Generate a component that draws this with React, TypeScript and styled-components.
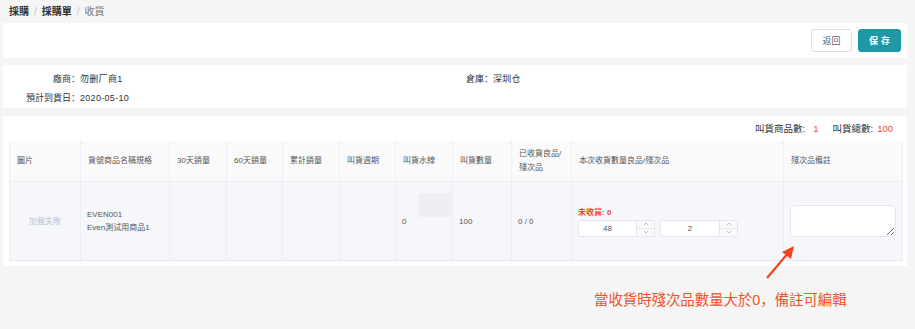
import React from "react";
import styled, { createGlobalStyle } from "styled-components";

const Global = createGlobalStyle`
  html, body { margin: 0; padding: 0; background: #f5f5f5; }
  body { font-family: "Liberation Sans", "Noto Sans CJK SC", "Noto Sans CJK TC", sans-serif; color: #303133; }
  * { box-sizing: border-box; }
`;

const Page = styled.div`
  position: relative;
  width: 915px;
  height: 329px;
  padding: 0 8px 0 3px;
  display: flex;
  flex-direction: column;
  overflow: hidden;
`;

const Crumbs = styled.div`
  height: 23px;
  display: flex;
  align-items: center;
  padding-left: 6px;
  font-size: 10px;
  line-height: 12px;
`;

const Crumb = styled.span<{ $current?: boolean }>`
  font-weight: ${(p) => (p.$current ? 400 : 700)};
  color: ${(p) => (p.$current ? "#777" : "#303133")};
`;

const Sep = styled.span`
  color: #c0c4cc;
  margin: 0 5px;
`;

const Card = styled.div<{ $h: number; $mt?: number }>`
  background: #fff;
  height: ${(p) => p.$h}px;
  margin-top: ${(p) => p.$mt ?? 0}px;
`;

const Toolbar = styled(Card)`
  display: flex;
  justify-content: flex-end;
  align-items: center;
  gap: 6px;
  padding-right: 6px;
`;

const Button = styled.button<{ $primary?: boolean }>`
  height: 23px;
  padding: 0;
  width: ${(p) => (p.$primary ? 43 : 41)}px;
  border-radius: 3px;
  border: 1px solid ${(p) => (p.$primary ? "#1f97a5" : "#dcdfe6")};
  background: ${(p) => (p.$primary ? "#1f97a5" : "#fff")};
  color: ${(p) => (p.$primary ? "#fff" : "#606266")};
  font-family: inherit;
  font-size: 9px;
  font-weight: ${(p) => (p.$primary ? 700 : 400)};
  letter-spacing: ${(p) => (p.$primary ? "3px" : "0")};
  text-indent: ${(p) => (p.$primary ? "3px" : "0")};
`;

const Info = styled(Card)`
  padding-top: 4px;
  display: grid;
  grid-template-columns: 452px 452px;
  grid-auto-rows: 19px;
  font-size: 9px;
  color: #303133;
`;

const Field = styled.div`
  display: flex;
  align-items: center;
`;

const Label = styled.span<{ $w: number }>`
  width: ${(p) => p.$w}px;
  text-align: right;
  white-space: nowrap;
`;

const Value = styled.span`
  letter-spacing: 0.3px;
`;

const TableCard = styled(Card)`
  padding: 0 5px 5px 6px;
  display: flex;
  flex-direction: column;
`;

const Summary = styled.div`
  height: 25px;
  display: flex;
  align-items: center;
  justify-content: flex-end;
  padding-right: 9px;
  font-size: 9.5px;
  color: #303133;
`;

const Red = styled.span<{ $ml?: number; $mr?: number }>`
  color: #f5472d;
  margin-left: ${(p) => p.$ml ?? 0}px;
  margin-right: ${(p) => p.$mr ?? 0}px;
`;

const Table = styled.table`
  border-collapse: collapse;
  table-layout: fixed;
  width: 893px;
  border-left: 1px solid #ebeef5;
`;

const Th = styled.th`
  height: 41px;
  background: #fafafa;
  border-right: 1px solid #ebeef5;
  border-bottom: 1px solid #ebeef5;
  text-align: left;
  vertical-align: middle;
  padding: 0 7px;
  font-size: 8px;
  line-height: 14px;
  font-weight: 400;
  color: #555;
`;

const Td = styled.td<{ $center?: boolean }>`
  position: relative;
  height: 79px;
  background: #f5f7fa;
  border-right: 1px solid #ebeef5;
  border-bottom: 1px solid #e4e7ed;
  padding: 0 6px;
  vertical-align: middle;
  text-align: ${(p) => (p.$center ? "center" : "left")};
  font-size: 8px;
  line-height: 13px;
  color: #555;
`;

const Failed = styled.span`
  color: #c0c4cc;
`;

const Ghost = styled.div`
  position: absolute;
  left: 22px;
  top: 11px;
  width: 38px;
  height: 24px;
  background: #eeeff2;
  border-radius: 2px;
`;

const Pending = styled.div`
  color: #f5472d;
  font-weight: 700;
  margin-bottom: 1px;
`;

const InputRow = styled.div`
  display: flex;
  gap: 5px;
`;

const NumberBox = styled.div<{ $w: number }>`
  width: ${(p) => p.$w}px;
  height: 17px;
  border: 1px solid #e4e7ed;
  border-radius: 2px;
  background: #fff;
  display: flex;
`;

const NumValue = styled.div`
  flex: 1;
  text-align: center;
  line-height: 15px;
  font-size: 8px;
  color: #555;
`;

const Stepper = styled.div`
  width: 18px;
  border-left: 1px solid #e4e7ed;
  display: flex;
  flex-direction: column;
  background: #fafafa;
`;

const Step = styled.div<{ $top?: boolean }>`
  flex: 1;
  display: flex;
  align-items: center;
  justify-content: center;
  border-bottom: ${(p) => (p.$top ? "1px solid #e4e7ed" : "none")};
`;

const Remark = styled.textarea`
  display: block;
  width: 106px;
  height: 32px;
  border: 1px solid #e4e7ed;
  border-radius: 3px;
  background: #fff;
  resize: both;
  outline: none;
  margin: 0;
`;

const Note = styled.div`
  margin-top: 24px;
  margin-left: 591px;
  font-size: 14.4px;
  line-height: 20px;
  color: #f2532a;
  white-space: nowrap;
`;

const ArrowSvg = styled.svg`
  position: absolute;
  left: 760px;
  top: 240px;
`;

const Chevron = ({ up }: { up?: boolean }) => (
  <svg width="6" height="4" viewBox="0 0 6 4">
    <path
      d={up ? "M0.8 3.2 L3 1 L5.2 3.2" : "M0.8 0.8 L3 3 L5.2 0.8"}
      fill="none"
      stroke="#a8abb2"
      strokeWidth="0.7"
    />
  </svg>
);

const NumInput = ({ value, w }: { value: string; w: number }) => (
  <NumberBox $w={w}>
    <NumValue>{value}</NumValue>
    <Stepper>
      <Step $top>
        <Chevron up />
      </Step>
      <Step>
        <Chevron />
      </Step>
    </Stepper>
  </NumberBox>
);

const cols = [71, 89, 57, 56, 57, 56, 57, 59, 60, 212, 119];

export default function App() {
  return (
    <Page>
      <Global />
      <Crumbs>
        <Crumb>採購</Crumb>
        <Sep>/</Sep>
        <Crumb>採購單</Crumb>
        <Sep>/</Sep>
        <Crumb $current>收貨</Crumb>
      </Crumbs>
      <Toolbar $h={35}>
        <Button>返回</Button>
        <Button $primary>保存</Button>
      </Toolbar>
      <Info $h={43} $mt={7}>
        <Field>
          <Label $w={77}>廠商：</Label>
          <Value>勿删厂商1</Value>
        </Field>
        <Field>
          <Label $w={38}>倉庫：</Label>
          <Value>深圳仓</Value>
        </Field>
        <Field>
          <Label $w={77}>預計到貨日：</Label>
          <Value>2020-05-10</Value>
        </Field>
      </Info>
      <TableCard $h={150} $mt={8}>
        <Summary>
          叫貨商品數:
          <Red $ml={8} $mr={14}>1</Red>
          叫貨總數:
          <Red $ml={4}>100</Red>
        </Summary>
        <Table>
          <colgroup>
            {cols.map((w, i) => (
              <col key={i} style={{ width: w }} />
            ))}
          </colgroup>
          <thead>
            <tr>
              <Th>圖片</Th>
              <Th>貨號商品名稱規格</Th>
              <Th>30天銷量</Th>
              <Th>60天銷量</Th>
              <Th>累計銷量</Th>
              <Th>叫貨週期</Th>
              <Th>叫貨水線</Th>
              <Th>叫貨數量</Th>
              <Th>
                已收貨良品/
                <br />
                殘次品
              </Th>
              <Th>本次收貨數量良品/殘次品</Th>
              <Th>殘次品備註</Th>
            </tr>
          </thead>
          <tbody>
            <tr>
              <Td $center>
                <Failed>加載失敗</Failed>
              </Td>
              <Td>
                EVEN001
                <br />
                Even測试用商品1
              </Td>
              <Td />
              <Td />
              <Td />
              <Td />
              <Td>
                0
                <Ghost />
              </Td>
              <Td>100</Td>
              <Td>0 / 0</Td>
              <Td>
                <Pending>未收貨: 0</Pending>
                <InputRow>
                  <NumInput value="48" w={77} />
                  <NumInput value="2" w={78} />
                </InputRow>
              </Td>
              <Td>
                <Remark />
              </Td>
            </tr>
          </tbody>
        </Table>
      </TableCard>
      <Note>當收貨時殘次品數量大於0，備註可編輯</Note>
      <ArrowSvg width="40" height="45" viewBox="0 0 40 45">
        <line x1="7" y1="38" x2="29" y2="12" stroke="#f2451c" strokeWidth="2.2" />
        <polygon points="34,6 22,12 31,19" fill="#f2451c" />
      </ArrowSvg>
    </Page>
  );
}
